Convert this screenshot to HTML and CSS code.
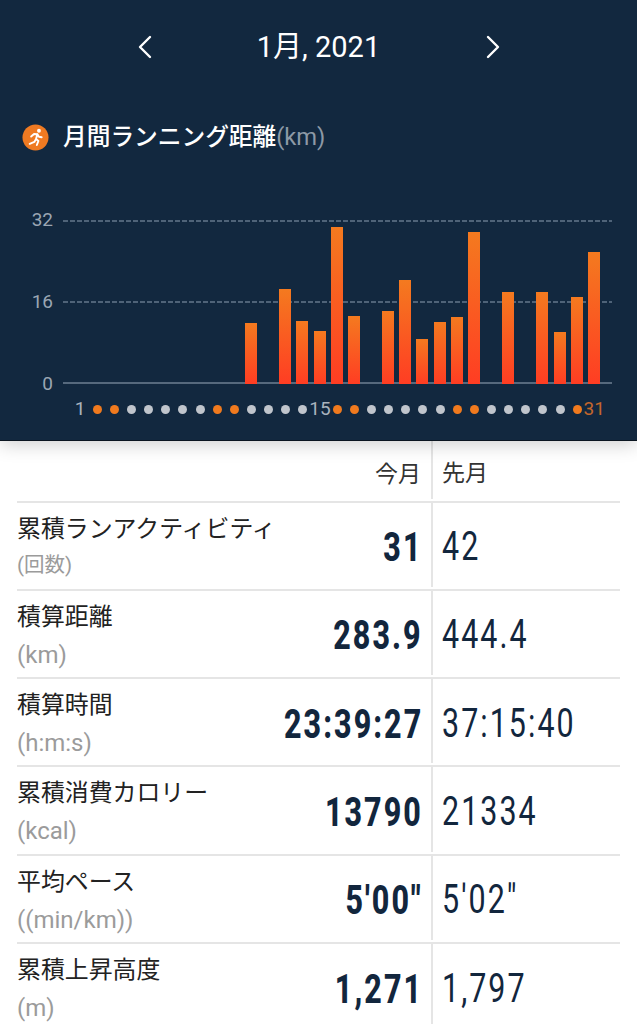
FILE: index.html
```html
<!DOCTYPE html>
<html lang="ja">
<head>
<meta charset="utf-8">
<title>月間ランニング距離</title>
<link rel="stylesheet" href="styles.css">
</head>
<body>
<div class="page">
  <header class="panel">
    <nav class="month-nav">
      <svg class="chev" viewBox="0 0 16 24"><path d="M13 2 L3 12 L13 22"/></svg>
      <div class="month">1月, 2021</div>
      <svg class="chev" viewBox="0 0 16 24"><path d="M3 2 L13 12 L3 22"/></svg>
    </nav>
    <div class="title-row">
      <svg class="run-icon" viewBox="0 0 28 28">
        <circle cx="14" cy="14" r="13.5" fill="#ef7a22"/>
        <circle cx="17.6" cy="7" r="2" fill="#fff"/>
        <path d="M9.5 13 L12.5 10.4 L16 10.6 L14.6 15.4 L17 17.6 L15.4 21.8 M14.6 15.4 L12.8 18.6 L8 20.6 M16 10.6 L17.6 13.2 L20.4 13.8" fill="none" stroke="#fff" stroke-width="2" stroke-linecap="round" stroke-linejoin="round"/>
      </svg>
      <h1 class="title">月間ランニング距離</h1><span class="title-unit">(km)</span>
    </div>
    <div class="chart">
      <div class="y-axis"><span>32</span><span>16</span><span>0</span></div>
      <div class="plot">
        <div class="line dashed"></div>
        <div class="line dashed"></div>
        <div class="line solid"></div>
        <div class="bars">
          <i></i><i></i><i></i><i></i><i></i><i></i><i></i><i></i><i></i><i></i>
          <b style="height:61px"></b><i></i><b style="height:95px"></b><b style="height:63px"></b><b style="height:53px"></b>
          <b style="height:157px"></b><b style="height:68px"></b><i></i><b style="height:73px"></b><b style="height:104px"></b>
          <b style="height:45px"></b><b style="height:62px"></b><b style="height:67px"></b><b style="height:152px"></b><i></i>
          <b style="height:92px"></b><i></i><b style="height:92px"></b><b style="height:52px"></b><b style="height:87px"></b><b style="height:132px"></b>
        </div>
      </div>
    </div>
    <div class="days">
      <span class="day">1</span><u class="on"></u><u class="on"></u><u></u><u></u><u></u><u></u><u></u><u class="on"></u><u class="on"></u>
      <u></u><u></u><u></u><u></u><span class="day">15</span><u class="on"></u><u class="on"></u><u></u><u></u><u></u>
      <u></u><u></u><u class="on"></u><u class="on"></u><u></u><u></u><u></u><u></u><u></u><u class="on"></u><span class="day last">31</span>
    </div>
  </header>
  <section class="table">
    <div class="row head"><div></div><div class="now-h">今月</div><div class="prev prev-h">先月</div></div>
    <div class="row"><div class="label">累積ランアクティビティ<small class="cjk">(回数)</small></div><div class="now"><span>31</span></div><div class="prev"><span class="num">42</span></div></div>
    <div class="row"><div class="label">積算距離<small>(km)</small></div><div class="now"><span>283.9</span></div><div class="prev"><span class="num">444.4</span></div></div>
    <div class="row"><div class="label">積算時間<small>(h:m:s)</small></div><div class="now"><span>23:39:27</span></div><div class="prev"><span class="num">37:15:40</span></div></div>
    <div class="row"><div class="label">累積消費カロリー<small>(kcal)</small></div><div class="now"><span>13790</span></div><div class="prev"><span class="num">21334</span></div></div>
    <div class="row"><div class="label">平均ペース<small>((min/km))</small></div><div class="now"><span>5'00"</span></div><div class="prev"><span class="num">5'02"</span></div></div>
    <div class="row"><div class="label">累積上昇高度<small>(m)</small></div><div class="now"><span>1,271</span></div><div class="prev"><span class="num">1,797</span></div></div>
  </section>
</div>
</body>
</html>
```
FILE: styles.css
```css
* { box-sizing: border-box; }
html, body { margin: 0; padding: 0; background: #fff; }
body { font-family: Roboto, "Noto Sans CJK JP", sans-serif; }
.page { width: 637px; height: 1024px; overflow: hidden; }

.panel { height: 441px; background: #12283f; border-bottom: 1px solid #0b1520; color: #fff; padding-top: 30px; box-shadow: 0 3px 18px rgba(0,0,0,.2); position: relative; z-index: 1; }
.month-nav { display: flex; align-items: center; justify-content: center; height: 34px; }
.month { width: 332px; text-align: center; font-size: 29px; line-height: 34px; }
.chev { width: 16px; height: 24px; fill: none; stroke: #fff; stroke-width: 2.4; stroke-linecap: round; stroke-linejoin: round; }

.title-row { display: flex; align-items: center; margin: 57px 0 0 22px; height: 32px; }
.run-icon { width: 27px; height: 27px; margin-right: 14px; flex: none; }
.title { margin: 0; font-size: 23.7px; font-weight: 500; line-height: 32px; }
.title-unit { font-size: 23.7px; color: #8d99a6; font-weight: 400; }

.chart { display: flex; margin-top: 67px; height: 164px; }
.y-axis { width: 63px; padding-right: 10px; display: flex; flex-direction: column; justify-content: space-between; text-align: right; font-size: 19px; line-height: 20px; color: #9aa6b3; margin: -10px 0; height: 184px; }
.plot { position: relative; width: 549px; height: 164px; display: flex; flex-direction: column; justify-content: space-between; }
.line { height: 1px; }
.dashed { height: 2px; background: repeating-linear-gradient(90deg, #4f6378 0 5px, transparent 5px 7px); }
.solid { height: 2px; background: #56697d; }
.bars { position: absolute; left: 8px; bottom: 0; height: 164px; display: grid; grid-template-columns: repeat(31, 17.15px); align-items: end; justify-items: center; }
.bars b { width: 12px; background: linear-gradient(#f47a1f, #ff3d23); }

.days { display: grid; grid-template-columns: repeat(31, 17.15px); margin: 15px 0 0 71.5px; height: 20px; align-items: center; justify-items: center; font-size: 19px; line-height: 20px; color: #a9b3bd; }
.days u { width: 9px; height: 9px; border-radius: 50%; background: #c0c5cc; }
.days u.on { background: #f07a1e; }
.day { white-space: nowrap; }
.day.last { color: #c4662c; }

.table { padding: 0 17px; }
.row { display: grid; grid-template-columns: 270px 144px 189px; height: 88.3px; border-bottom: 2px solid #e5e5e5; }
.row.head { height: 61.5px; }
.prev { border-left: 2px solid #e5e5e5; padding-left: 9px; margin-bottom: 2px; display: flex; align-items: center; }
.now-h, .prev-h { font-size: 23px; color: #333; align-self: stretch; display: flex; align-items: center; padding-top: 2px; }
.now-h { padding-right: 10px; justify-content: flex-end; }
.label { font-size: 23.9px; line-height: 30px; color: #222; padding-top: 11px; white-space: nowrap; }
.label small { display: block; font-size: 24px; line-height: 26px; margin-top: 10px; color: #9b9b9b; font-weight: 400; }
.label small.cjk { font-size: 20.5px; margin-top: 8px; }
.now { display: flex; justify-content: flex-end; align-items: center; padding-right: 8px; padding-top: 4px; }
.now span { flex: none; font-size: 40px; font-weight: 800; letter-spacing: 2.7px; color: #12263d; white-space: nowrap; transform: scaleX(.76); transform-origin: right center; }
.num { flex: none; font-size: 40px; letter-spacing: 2.7px; color: #12263d; white-space: nowrap; transform: scaleX(.76); transform-origin: left center; padding-top: 4px; }
```
